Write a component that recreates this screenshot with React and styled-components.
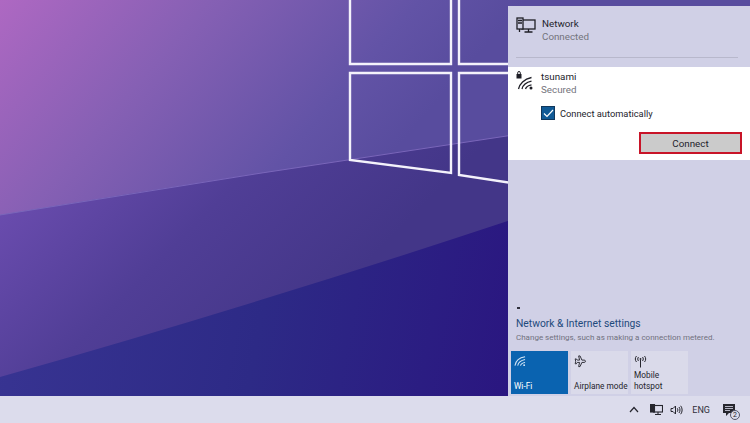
import React from "react";
import styled, { createGlobalStyle } from "styled-components";

const GlobalStyle = createGlobalStyle`
  html, body {
    margin: 0;
    padding: 0;
    overflow: hidden;
    font-family: Roboto, "Noto Sans", sans-serif;
  }
`;

const Screen = styled.div`
  width: 750px;
  height: 423px;
  display: flex;
  flex-direction: column;
  position: relative;
  overflow: hidden;
`;

const Desktop = styled.div`
  height: 396px;
  display: flex;
  justify-content: flex-end;
  position: relative;
`;

const WallpaperSvg = styled.svg`
  position: absolute;
  inset: 0;
  width: 750px;
  height: 396px;
`;

const Flyout = styled.aside`
  position: relative;
  width: 242px;
  margin-top: 6px;
  display: flex;
  flex-direction: column;
  background: #d0d0e6;
  color: #1c1c28;
`;

const ConnectedRow = styled.div`
  height: 51px;
  display: flex;
  gap: 6px;
  padding: 11px 0 0 8px;
  box-sizing: border-box;
  flex-shrink: 0;
`;

const Divider = styled.div`
  height: 1px;
  margin: 0 12px 9px 8px;
  background: #b8b8cc;
  flex-shrink: 0;
`;

const Label = styled.div`
  font-size: 9.8px;
  line-height: 13px;
  color: ${(p) => (p.$muted ? "#74747c" : "#24242c")};
`;

const SelectedCard = styled.div`
  height: 93px;
  background: #ffffff;
  flex-shrink: 0;
  display: flex;
  flex-direction: column;
  padding: 3px 8px 0 8px;
  box-sizing: border-box;
`;

const WifiRow = styled.div`
  display: flex;
  gap: 7px;
`;

const AutoRow = styled.label`
  display: flex;
  align-items: center;
  gap: 5px;
  margin: 10px 0 0 25px;
  font-size: 9.3px;
  color: #24242c;
`;

const Check = styled.span`
  width: 14px;
  height: 14px;
  background: #0f5a96;
  border: 1px solid #10375c;
  box-sizing: border-box;
  display: flex;
  align-items: center;
  justify-content: center;
`;

const ConnectButton = styled.button`
  align-self: flex-end;
  width: 103px;
  height: 22px;
  margin: 12px 0 0 0;
  background: #cbcbcb;
  border: 2px solid #c81428;
  color: #24242c;
  font: inherit;
  font-size: 9.8px;
  padding: 0;
`;

const BottomArea = styled.div`
  margin-top: auto;
  display: flex;
  flex-direction: column;
`;

const SettingsBlock = styled.div`
  padding: 0 0 6px 8px;
`;

const Tick = styled.div`
  width: 3px;
  height: 2px;
  background: #30303c;
  margin: 0 0 8px 1px;
`;

const SettingsLink = styled.div`
  font-size: 10.3px;
  line-height: 14px;
  color: #1e4a7c;
`;

const SettingsHint = styled.div`
  font-size: 8px;
  line-height: 14px;
  color: #70707e;
`;

const Tiles = styled.div`
  display: flex;
  gap: 3px;
  padding: 0 0 2px 3px;
`;

const Tile = styled.div`
  width: 57px;
  height: 43px;
  box-sizing: border-box;
  padding: 4px 0 2px 3px;
  display: flex;
  flex-direction: column;
  justify-content: space-between;
  background: ${(p) => (p.$active ? "#0a63b0" : "#dadaea")};
  color: ${(p) => (p.$active ? "#ffffff" : "#24242c")};
  font-size: 8.3px;
  line-height: 11px;
  white-space: nowrap;
`;

const Taskbar = styled.footer`
  height: 27px;
  background: #dcdcec;
  display: flex;
  align-items: center;
  justify-content: flex-end;
  gap: 7px;
  padding-right: 9px;
  color: #24242c;
`;

const ChevronSvg = styled.svg`
  margin-right: 4px;
`;

const Lang = styled.span`
  font-size: 9px;
  margin: 0 5px 0 2px;
  color: #30303a;
`;

const NotifyWrap = styled.span`
  position: relative;
  display: flex;
  width: 19px;
`;

const NotifyBadge = styled.span`
  position: absolute;
  right: 1px;
  bottom: -3px;
  width: 10px;
  height: 10px;
  line-height: 9px;
  border-radius: 50%;
  background: #dcdcec;
  border: 1px solid #55556a;
  box-sizing: border-box;
  font-size: 7px;
  text-align: center;
`;

const Wallpaper = () => (
  <WallpaperSvg viewBox="0 0 750 396" preserveAspectRatio="none">
    <defs>
      <linearGradient id="sky" gradientUnits="userSpaceOnUse" x1="0" y1="0" x2="300" y2="260">
        <stop offset="0" stopColor="#ae68c2" />
        <stop offset="0.4" stopColor="#8660b4" />
        <stop offset="0.8" stopColor="#6253a6" />
        <stop offset="1" stopColor="#584c9e" />
      </linearGradient>
      <linearGradient id="floor" gradientUnits="userSpaceOnUse" x1="20" y1="190" x2="230" y2="400">
        <stop offset="0" stopColor="#6a4cae" />
        <stop offset="0.5" stopColor="#503e96" />
        <stop offset="1" stopColor="#433688" />
      </linearGradient>
      <linearGradient id="shade" gradientUnits="userSpaceOnUse" x1="0" y1="300" x2="510" y2="396">
        <stop offset="0" stopColor="#383492" />
        <stop offset="0.5" stopColor="#2d2a86" />
        <stop offset="1" stopColor="#2a1680" />
      </linearGradient>
    </defs>
    <rect width="750" height="396" fill="url(#sky)" />
    <path d="M0 215 Q 260 172 520 134 V396 H0 Z" fill="url(#floor)" />
    <path d="M0 215 Q 260 172 520 134" fill="none" stroke="#7a66ba" strokeWidth="1" />
    <path d="M0 377 Q 255 305 520 217 V396 H0 Z" fill="url(#shade)" />
    <g fill="none" stroke="#f4f2fb" strokeWidth="2.4">
      <polyline points="350,-4 350,64 451,64 451,-4" />
      <polyline points="459,-4 459,64 512,64" />
      <polygon points="350,73 451,73 451,173 350,160" />
      <polyline points="512,73 459,73 459,175 512,183" />
    </g>
  </WallpaperSvg>
);

const MonitorIcon = () => (
  <svg width="20" height="18" viewBox="0 0 20 18" fill="none" stroke="#1e1e26" strokeWidth="1.3">
    <rect x="6" y="3" width="13" height="9" />
    <rect x="1" y="1" width="6" height="11" fill="#d0d0e6" />
    <path d="M2 3.500h4M2 6h4M12.500 12v3M8.500 15h8M3.500 12v3" />
  </svg>
);

const WifiLockIcon = () => (
  <svg width="18" height="20" viewBox="0 0 18 20" fill="none" stroke="#1e1e26" strokeWidth="1.3">
    <rect x="0.500" y="4" width="5" height="4.500" fill="#1e1e26" stroke="none" />
    <path d="M1.700 4V2.800a1.300 1.300 0 0 1 2.600 0V4" strokeWidth="1" />
    <path d="M2.500 19c1-5 5.500-10 13-11.500M6 19c.8-3.500 3.800-6.500 9.500-7.800M9.500 19c.5-1.800 2.200-3.500 6-4.200" />
    <circle cx="15" cy="18" r="1.500" fill="#1e1e26" stroke="none" />
  </svg>
);

const WifiTileIcon = () => (
  <svg width="12" height="12" viewBox="0 0 13 12" fill="none" stroke="#d5e6f6" strokeWidth="1.100">
    <path d="M1 11c.8-4.500 4.500-8.500 11-9.500M4 11c.7-3 2.800-5.500 8-6.500M7 11c.4-1.500 1.700-2.800 5-3.300" />
    <circle cx="11" cy="10.500" r="1" fill="#d5e6f6" stroke="none" />
  </svg>
);

const PlaneIcon = () => (
  <svg width="13" height="13" viewBox="0 0 13 14" fill="none" stroke="#26262e" strokeWidth="1">
    <path d="M4.500 1h1.500l2 4.500h2.500c1.800 0 1.800 2.500 0 2.500H8l-2 4.500H4.500L5.500 8H3L2 9.500H.8L1.300 6.800.8 4.200H2L3 5.500h2.500z" />
  </svg>
);

const HotspotIcon = () => (
  <svg width="13" height="13" viewBox="0 0 13 13" fill="none" stroke="#26262e" strokeWidth="1">
    <path d="M6.500 5v7.500" />
    <circle cx="6.500" cy="4" r="0.900" fill="#26262e" stroke="none" />
    <path d="M4.500 2c-1 1.200-1 2.800 0 4M8.500 2c1 1.200 1 2.800 0 4M2.500 1c-1.600 1.800-1.600 4.200 0 6M10.500 1c1.600 1.800 1.600 4.200 0 6" />
  </svg>
);

const ChevronIcon = () => (
  <ChevronSvg width="10" height="7" viewBox="0 0 10 7" fill="none" stroke="#26262e" strokeWidth="1.200">
    <path d="M1 6l4-4.500L9 6" />
  </ChevronSvg>
);

const TrayNetworkIcon = () => (
  <svg width="13" height="12" viewBox="0 0 13 12" fill="none" stroke="#26262e" strokeWidth="1.100">
    <rect x="3.500" y="1.500" width="9" height="6.500" />
    <rect x="0.500" y="0.500" width="4" height="7.500" fill="#26262e" />
    <path d="M8 8v2.500M5 10.500h6" />
  </svg>
);

const SpeakerIcon = () => (
  <svg width="13" height="12" viewBox="0 0 13 12" fill="none" stroke="#26262e" strokeWidth="1">
    <path d="M1 4.500h2l2.500-2.500v8L3 7.500H1z" />
    <path d="M7.300 4.300c.7 1 .7 2.400 0 3.400M9 3c1.300 1.800 1.300 4.200 0 6M10.700 1.800c1.900 2.500 1.900 5.900 0 8.400" />
  </svg>
);

const NotifyIcon = () => (
  <svg width="14" height="14" viewBox="0 0 14 14">
    <path d="M1 1h12v9H7l-3 3v-3H1z" fill="#26262e" />
    <path d="M3 3.500h8M3 5.500h8M3 7.500h5" stroke="#dcdcec" strokeWidth="0.800" />
  </svg>
);

export default function App() {
  return (
    <Screen>
      <GlobalStyle />
      <Desktop>
        <Wallpaper />
        <Flyout>
          <ConnectedRow>
            <MonitorIcon />
            <div>
              <Label>Network</Label>
              <Label $muted>Connected</Label>
            </div>
          </ConnectedRow>
          <Divider />
          <SelectedCard>
            <WifiRow>
              <WifiLockIcon />
              <div>
                <Label>tsunami</Label>
                <Label $muted>Secured</Label>
              </div>
            </WifiRow>
            <AutoRow>
              <Check>
                <svg width="11" height="9" viewBox="0 0 11 9" fill="none" stroke="#ffffff" strokeWidth="1.200">
                  <path d="M1 4.500l3 3 6-6.500" />
                </svg>
              </Check>
              Connect automatically
            </AutoRow>
            <ConnectButton>Connect</ConnectButton>
          </SelectedCard>
          <BottomArea>
            <SettingsBlock>
              <Tick />
              <SettingsLink>Network &amp; Internet settings</SettingsLink>
              <SettingsHint>Change settings, such as making a connection metered.</SettingsHint>
            </SettingsBlock>
            <Tiles>
              <Tile $active>
                <WifiTileIcon />
                <span>Wi-Fi</span>
              </Tile>
              <Tile>
                <PlaneIcon />
                <span>Airplane mode</span>
              </Tile>
              <Tile>
                <HotspotIcon />
                <span>Mobile<br />hotspot</span>
              </Tile>
            </Tiles>
          </BottomArea>
        </Flyout>
      </Desktop>
      <Taskbar>
        <ChevronIcon />
        <TrayNetworkIcon />
        <SpeakerIcon />
        <Lang>ENG</Lang>
        <NotifyWrap>
          <NotifyIcon />
          <NotifyBadge>2</NotifyBadge>
        </NotifyWrap>
      </Taskbar>
    </Screen>
  );
}
